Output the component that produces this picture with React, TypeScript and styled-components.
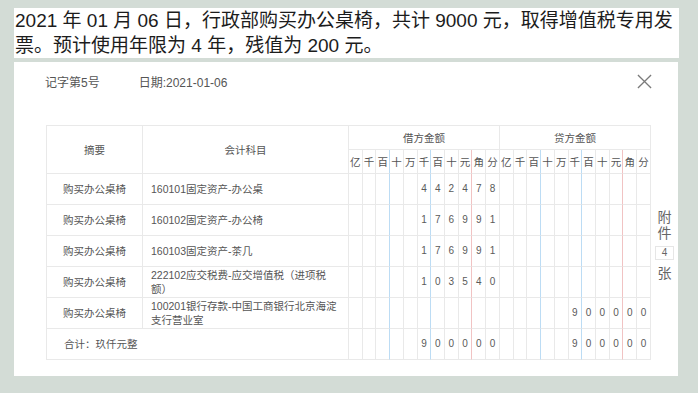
import React from 'react'
import styled, { createGlobalStyle } from 'styled-components'

const GlobalStyle = createGlobalStyle`
  body {
    margin: 0;
    background: #d3dcd6;
    font-family: 'Liberation Sans', 'Noto Sans CJK SC', sans-serif;
  }
`

const Page = styled.div`
  width: 698px;
  box-sizing: border-box;
  padding: 8px 19px 0 14px;
`

const Prompt = styled.p`
  margin: 0;
  padding: 0 4px 0 1px;
  background: #fff;
  color: #1c1c1c;
  font-size: 19px;
  line-height: 25px;
`

const Panel = styled.div`
  margin: 4px 1px 0 0;
  height: 314px;
  background: #fff;
`

const HeaderBar = styled.div`
  display: flex;
  align-items: center;
  justify-content: space-between;
  height: 38px;
  padding: 0 26px 0 31px;
  font-size: 12px;
  color: #555;
`

const Meta = styled.div`
  display: flex;
  gap: 39px;
`

const CloseIcon = styled.svg`
  width: 15px;
  height: 15px;
  stroke: #7a7a7a;
  stroke-width: 1.4;
`

const Body = styled.div`
  display: flex;
  align-items: center;
  margin-top: 25px;
  padding-left: 32px;
`

const Table = styled.table`
  width: 605px;
  table-layout: fixed;
  border-collapse: separate;
  border-spacing: 0;
  border-top: 1px solid #e9e9e9;
  border-left: 1px solid #e9e9e9;
  font-size: 10.5px;
  color: #555;
`

const Cell = styled.td<{ $sep?: 'blue' | 'red'; $h?: number }>`
  box-sizing: border-box;
  height: ${(p) => p.$h ?? 31}px;
  padding: 0;
  border-right: 1px solid
    ${(p) => (p.$sep === 'blue' ? '#bcdcf4' : p.$sep === 'red' ? '#f1c3c3' : '#e9e9e9')};
  border-bottom: 1px solid #e9e9e9;
  text-align: center;
  line-height: 14px;
`

const Account = styled(Cell)`
  padding-left: 8px;
  text-align: left;
`

const Total = styled(Cell)`
  padding-left: 17px;
  text-align: left;
`

const Digit = styled(Cell)`
  font-size: 10px;
  color: #5a5a5a;
`

const Attach = styled.div`
  flex: 1;
  display: flex;
  flex-direction: column;
  align-items: center;
  padding-top: 4px;
  font-size: 14px;
  line-height: 16px;
  color: #666;
`

const AttachCount = styled.span`
  margin: 5px 0;
  width: 17px;
  height: 12px;
  border: 1px solid #e6e6e6;
  font-size: 10px;
  line-height: 12px;
  text-align: center;
`

const units = ['亿', '千', '百', '十', '万', '千', '百', '十', '元', '角', '分']

const sepFor = (i: number): 'blue' | 'red' | undefined =>
  i === 2 || i === 5 ? 'blue' : i === 8 ? 'red' : undefined

const spread = (amount: string) => {
  const pad = Array(11 - amount.length).fill('')
  return pad.concat(amount.split(''))
}

interface Entry {
  summary: string
  account: string[]
  debit: string
  credit: string
}

const entries: Entry[] = [
  { summary: '购买办公桌椅', account: ['160101固定资产-办公桌'], debit: '442478', credit: '' },
  { summary: '购买办公桌椅', account: ['160102固定资产-办公椅'], debit: '176991', credit: '' },
  { summary: '购买办公桌椅', account: ['160103固定资产-茶几'], debit: '176991', credit: '' },
  {
    summary: '购买办公桌椅',
    account: ['222102应交税费-应交增值税（进项税', '额）'],
    debit: '103540',
    credit: '',
  },
  {
    summary: '购买办公桌椅',
    account: ['100201银行存款-中国工商银行北京海淀', '支行营业室'],
    debit: '',
    credit: '900000',
  },
]

const Digits = ({ amount, prefix }: { amount: string; prefix: string }) => (
  <>
    {spread(amount).map((d, i) => (
      <Digit key={prefix + i} $sep={sepFor(i)}>
        {d}
      </Digit>
    ))}
  </>
)

export default function App() {
  return (
    <Page>
      <GlobalStyle />
      <Prompt>
        2021 年 01 月 06 日，行政部购买办公桌椅，共计 9000 元，取得增值税专用发
        <br />
        票。预计使用年限为 4 年，残值为 200 元。
      </Prompt>
      <Panel>
        <HeaderBar>
          <Meta>
            <span>记字第5号</span>
            <span>日期:2021-01-06</span>
          </Meta>
          <CloseIcon viewBox="0 0 16 16" fill="none">
            <path d="M1 1 L15 15 M15 1 L1 15" />
          </CloseIcon>
        </HeaderBar>
        <Body>
          <Table>
            <colgroup>
              <col style={{ width: 96 }} />
              <col style={{ width: 206 }} />
              {Array.from({ length: 22 }).map((_, i) => (
                <col key={i} />
              ))}
            </colgroup>
            <thead>
              <tr>
                <Cell rowSpan={2} $h={48}>摘要</Cell>
                <Cell rowSpan={2} $h={48}>会计科目</Cell>
                <Cell colSpan={11} $h={24}>借方金额</Cell>
                <Cell colSpan={11} $h={24}>贷方金额</Cell>
              </tr>
              <tr>
                {units.concat(units).map((u, i) => (
                  <Cell key={i} $h={24} $sep={sepFor(i % 11)}>
                    {u}
                  </Cell>
                ))}
              </tr>
            </thead>
            <tbody>
              {entries.map((e, r) => (
                <tr key={r}>
                  <Cell>{e.summary}</Cell>
                  <Account>
                    {e.account.map((line, k) => (
                      <React.Fragment key={k}>
                        {k > 0 && <br />}
                        {line}
                      </React.Fragment>
                    ))}
                  </Account>
                  <Digits amount={e.debit} prefix="d" />
                  <Digits amount={e.credit} prefix="c" />
                </tr>
              ))}
              <tr>
                <Total colSpan={2}>合计：玖仟元整</Total>
                <Digits amount="900000" prefix="d" />
                <Digits amount="900000" prefix="c" />
              </tr>
            </tbody>
          </Table>
          <Attach>
            <span>附</span>
            <span>件</span>
            <AttachCount>4</AttachCount>
            <span>张</span>
          </Attach>
        </Body>
      </Panel>
    </Page>
  )
}
